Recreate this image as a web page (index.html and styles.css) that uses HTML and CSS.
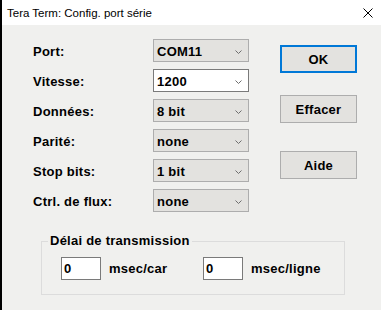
FILE: index.html
```html
<!DOCTYPE html>
<html lang="fr">
<head>
    <meta charset="UTF-8">
    <title>Tera Term: Config. port série</title>
    <link rel="stylesheet" href="styles.css">
</head>
<body>
    <div class="window">
        <div class="titlebar">
            <span class="title">Tera Term: Config. port série</span>
            <svg class="close" width="10" height="10" viewBox="0 0 10 10">
                <path d="M0.5 0.5 L9.5 9.5 M9.5 0.5 L0.5 9.5" stroke="#000" stroke-width="1" fill="none"/>
            </svg>
        </div>

        <div class="dialog">
            <div class="top">
                <!-- Port settings -->
                <div class="fields">
                    <div class="row">
                        <label>Port:</label>
                        <div class="combo"><span>COM11</span><svg class="chevron" width="7" height="4" viewBox="0 0 7 4"><path d="M0.5 0.5 L3.5 3.5 L6.5 0.5" stroke="#6d6d6d" fill="none"/></svg></div>
                    </div>
                    <div class="row">
                        <label>Vitesse:</label>
                        <div class="combo editable"><span>1200</span><svg class="chevron" width="7" height="4" viewBox="0 0 7 4"><path d="M0.5 0.5 L3.5 3.5 L6.5 0.5" stroke="#6d6d6d" fill="none"/></svg></div>
                    </div>
                    <div class="row">
                        <label>Données:</label>
                        <div class="combo"><span>8 bit</span><svg class="chevron" width="7" height="4" viewBox="0 0 7 4"><path d="M0.5 0.5 L3.5 3.5 L6.5 0.5" stroke="#6d6d6d" fill="none"/></svg></div>
                    </div>
                    <div class="row">
                        <label>Parité:</label>
                        <div class="combo"><span>none</span><svg class="chevron" width="7" height="4" viewBox="0 0 7 4"><path d="M0.5 0.5 L3.5 3.5 L6.5 0.5" stroke="#6d6d6d" fill="none"/></svg></div>
                    </div>
                    <div class="row">
                        <label>Stop bits:</label>
                        <div class="combo"><span>1 bit</span><svg class="chevron" width="7" height="4" viewBox="0 0 7 4"><path d="M0.5 0.5 L3.5 3.5 L6.5 0.5" stroke="#6d6d6d" fill="none"/></svg></div>
                    </div>
                    <div class="row">
                        <label>Ctrl. de flux:</label>
                        <div class="combo"><span>none</span><svg class="chevron" width="7" height="4" viewBox="0 0 7 4"><path d="M0.5 0.5 L3.5 3.5 L6.5 0.5" stroke="#6d6d6d" fill="none"/></svg></div>
                    </div>
                </div>

                <!-- Buttons -->
                <div class="buttons">
                    <button class="btn default">OK</button>
                    <button class="btn btn-clear">Effacer</button>
                    <button class="btn btn-help">Aide</button>
                </div>
            </div>

            <fieldset class="group">
                <legend>Délai de transmission</legend>
                <div class="delay">
                    <div class="delay-item">
                        <div class="textbox">0</div>
                        <span>msec/car</span>
                    </div>
                    <div class="delay-item">
                        <div class="textbox">0</div>
                        <span>msec/ligne</span>
                    </div>
                </div>
            </fieldset>
        </div>
    </div>
</body>
</html>
```

FILE: styles.css
```css
:root {
    --bg: #f0f0ee;
    --control: #e3e2df;
    --control-border: #adadad;
    --field-border: #7a7a7a;
    --accent: #0078d7;
}

* {
    box-sizing: border-box;
    margin: 0;
    padding: 0;
}

body {
    width: 381px;
    height: 310px;
    overflow: hidden;
    background: var(--bg);
    font-family: 'Liberation Sans', Arial, sans-serif;
    font-size: 13px;
    font-weight: bold;
    letter-spacing: 0.25px;
    color: #000;
}

.window {
    height: 310px;
    border-left: 2px solid #000;
}

.titlebar {
    height: 25px;
    background: #fff;
    display: flex;
    align-items: center;
    justify-content: space-between;
    padding: 1px 8px 0 5px;
}

.title {
    font-size: 11.5px;
    font-weight: normal;
    letter-spacing: 0;
}

.dialog {
    padding: 14px 0 0 31px;
}

.top {
    display: flex;
}

.fields {
    display: flex;
    flex-direction: column;
    gap: 7px;
}

.row {
    display: flex;
    align-items: center;
    height: 23px;
}

label {
    width: 120px;
    padding-top: 1px;
}

.combo {
    width: 96px;
    height: 23px;
    display: flex;
    align-items: center;
    justify-content: space-between;
    padding: 1px 6px 0 3px;
    background: var(--control);
    border: 1px solid var(--control-border);
}

.combo.editable {
    background: #fff;
    border-color: var(--field-border);
}

.chevron {
    margin-top: 1px;
}

.buttons {
    display: flex;
    flex-direction: column;
    margin-left: 31px;
    padding-top: 6px;
}

.btn {
    width: 77px;
    height: 28px;
    font: inherit;
    letter-spacing: inherit;
    color: #000;
    background: var(--control);
    border: 1px solid var(--control-border);
}

.btn.default {
    border: 2px solid var(--accent);
}

.btn-clear {
    margin-top: 22px;
}

.btn-help {
    margin-top: 28px;
}

.group {
    width: 304px;
    margin: 21px 0 0 8px;
    border: 1px solid #dcdcdc;
    padding: 0;
    min-width: 0;
}

.group legend {
    margin-left: 6px;
    padding: 0 2px;
    line-height: 16px;
}

.delay {
    display: grid;
    grid-template-columns: 142px auto;
    padding: 8px 0 14px 19px;
}

.delay-item {
    display: flex;
    align-items: center;
    gap: 8px;
}

.textbox {
    width: 40px;
    height: 23px;
    padding: 2px 0 0 2px;
    background: #fff;
    border: 1px solid var(--field-border);
    line-height: 18px;
}
```
